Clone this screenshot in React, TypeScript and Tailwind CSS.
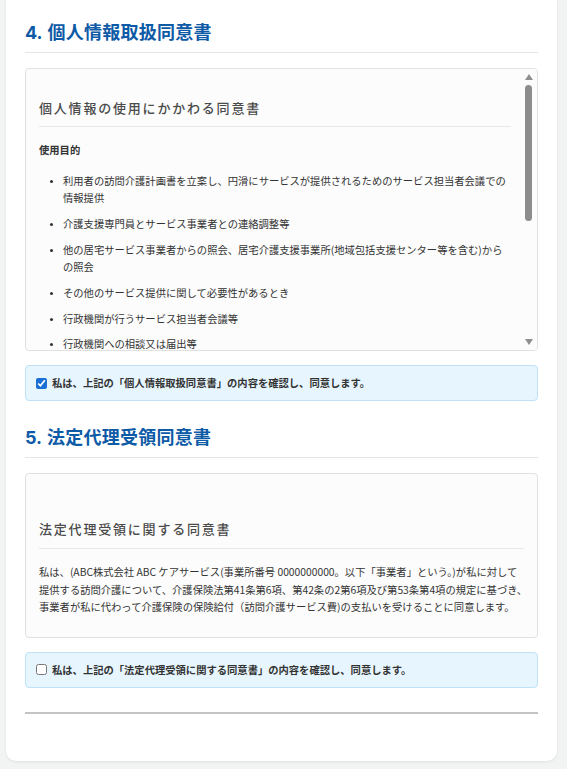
import React from "react";

const jp = { fontFamily: '"Noto Sans CJK JP", "Noto Sans", sans-serif' };

function SectionHeading({ num, title }: { num: string; title: string }) {
  return (
    <h2
      className="border-b border-[#e3e6e8] pb-[6px] text-[18px] font-bold leading-[26px] text-[#0d5aa6]"
      style={jp}
    >
      <span className="font-['Inter'] font-bold">{num}</span>
      <span className="ml-[5px] inline-block w-[164px] [text-align-last:justify]">{title}</span>
    </h2>
  );
}

function ConsentBox({ checked, label }: { checked: boolean; label: string }) {
  return (
    <label className="mt-[14px] flex h-[36px] items-center gap-[5px] rounded-[4px] border border-[#bfe2f8] bg-[#e7f6fe] pl-[10px]">
      <input
        type="checkbox"
        defaultChecked={checked}
        className="m-0 h-[11px] w-[11px] accent-[#1a6fd4]"
      />
      <span className="text-[10.3px] font-bold leading-[16px] text-[#333]" style={jp}>
        {label}
      </span>
    </label>
  );
}

export default function App() {
  const items = [
    <>利用者の訪問介護計画書を立案し、円滑にサービスが提供されるためのサービス担当者会議での<br />情報提供</>,
    <>介護支援専門員とサービス事業者との連絡調整等</>,
    <>他の居宅サービス事業者からの照会、居宅介護支援事業所(地域包括支援センター等を含む)から<br />の照会</>,
    <>その他のサービス提供に関して必要性があるとき</>,
    <>行政機関が行うサービス担当者会議等</>,
    <>行政機関への相談又は届出等</>,
    <>損害賠償保険などに係る保険会社等への相談又は届出等</>,
  ];
  return (
    <div className="min-h-[769px] bg-[#f2f4f4] pl-[6px] pr-[10px] pb-[10px]">
      <div className="rounded-b-[10px] bg-white px-[19px] pt-[18px] pb-[47px] shadow-[0_1px_3px_rgba(0,0,0,0.08)]">
        <SectionHeading num="4." title="個人情報取扱同意書" />

        <div className="relative mt-[15px] h-[283px] overflow-hidden rounded-[4px] border border-[#e1e1e1] bg-[#fcfcfc]">
          <div
            className="h-full overflow-hidden pl-[13px] pr-[26px] pt-[29px] pb-[20px] text-[#333]"
            style={jp}
          >
            <h3 className="border-b border-[#e8e8e8] pb-[8px] text-[13px] font-medium leading-[20px] tracking-[1.8px] text-[#4a4a4a]">
              個人情報の使用にかかわる同意書
            </h3>
            <p className="mt-[14px] text-[10.3px] font-bold leading-[17.5px]">使用目的</p>
            <ul className="mt-[13px] list-disc space-y-[8.3px] pl-[24px] text-[10.3px] leading-[17.5px] marker:text-[8px]">
              {items.map((it, i) => (
                <li key={i}>{it}</li>
              ))}
            </ul>
            <p className="mt-[18px] text-[10.3px] font-bold leading-[17.5px]">使用する事業者の範囲</p>
            <ul className="mt-[13px] list-disc space-y-[8.3px] pl-[24px] text-[10.3px] leading-[17.5px]">
              <li>利用者が利用するサービス事業者、居宅介護支援事業所、主治医等</li>
              <li>利用者の家族及び身元引受人</li>
            </ul>
          </div>
          {/* scrollbar overlay */}
          <div className="absolute right-0 top-0 bottom-0 w-[15px] bg-[#fcfcfc]">
            <svg className="absolute left-[3px] top-[5px]" width="8" height="6" viewBox="0 0 8 6">
              <polygon points="4,0 8,6 0,6" fill="#8f8f8f" />
            </svg>
            <div className="absolute left-[3px] top-[16px] h-[136px] w-[7px] rounded-full bg-[#8c8c8c]" />
            <svg className="absolute left-[3px] bottom-[5px]" width="8" height="6" viewBox="0 0 8 6">
              <polygon points="0,0 8,0 4,6" fill="#8f8f8f" />
            </svg>
          </div>
        </div>

        <ConsentBox checked={true} label="私は、上記の「個人情報取扱同意書」の内容を確認し、同意します。" />

        <div className="mt-[22px]">
          <SectionHeading num="5." title="法定代理受領同意書" />
        </div>

        <div
          className="mt-[15px] rounded-[4px] border border-[#e1e1e1] bg-[#fcfcfc] pl-[13px] pr-[13px] pt-[45px] pb-[21px] text-[#333]"
          style={jp}
        >
          <h3 className="border-b border-[#e8e8e8] pb-[9px] text-[13px] font-medium leading-[20px] tracking-[1.8px] text-[#4a4a4a]">
            法定代理受領に関する同意書
          </h3>
          <p className="mt-[14px] whitespace-nowrap text-[10.3px] leading-[17.5px]">
            私は、(ABC株式会社 ABC ケアサービス(事業所番号 0000000000。以下「事業者」という。)が私に対して
            <br />
            提供する訪問介護について、介護保険法第41条第6項、第42条の2第6項及び第53条第4項の規定に基づき、
            <br />
            事業者が私に代わって介護保険の保険給付（訪問介護サービス費)の支払いを受けることに同意します。
          </p>
        </div>

        <ConsentBox checked={false} label="私は、上記の「法定代理受領に関する同意書」の内容を確認し、同意します。" />

        <hr className="mt-[24px] border-0 border-t-2 border-[#c4c4c4]" />
      </div>
    </div>
  );
}
